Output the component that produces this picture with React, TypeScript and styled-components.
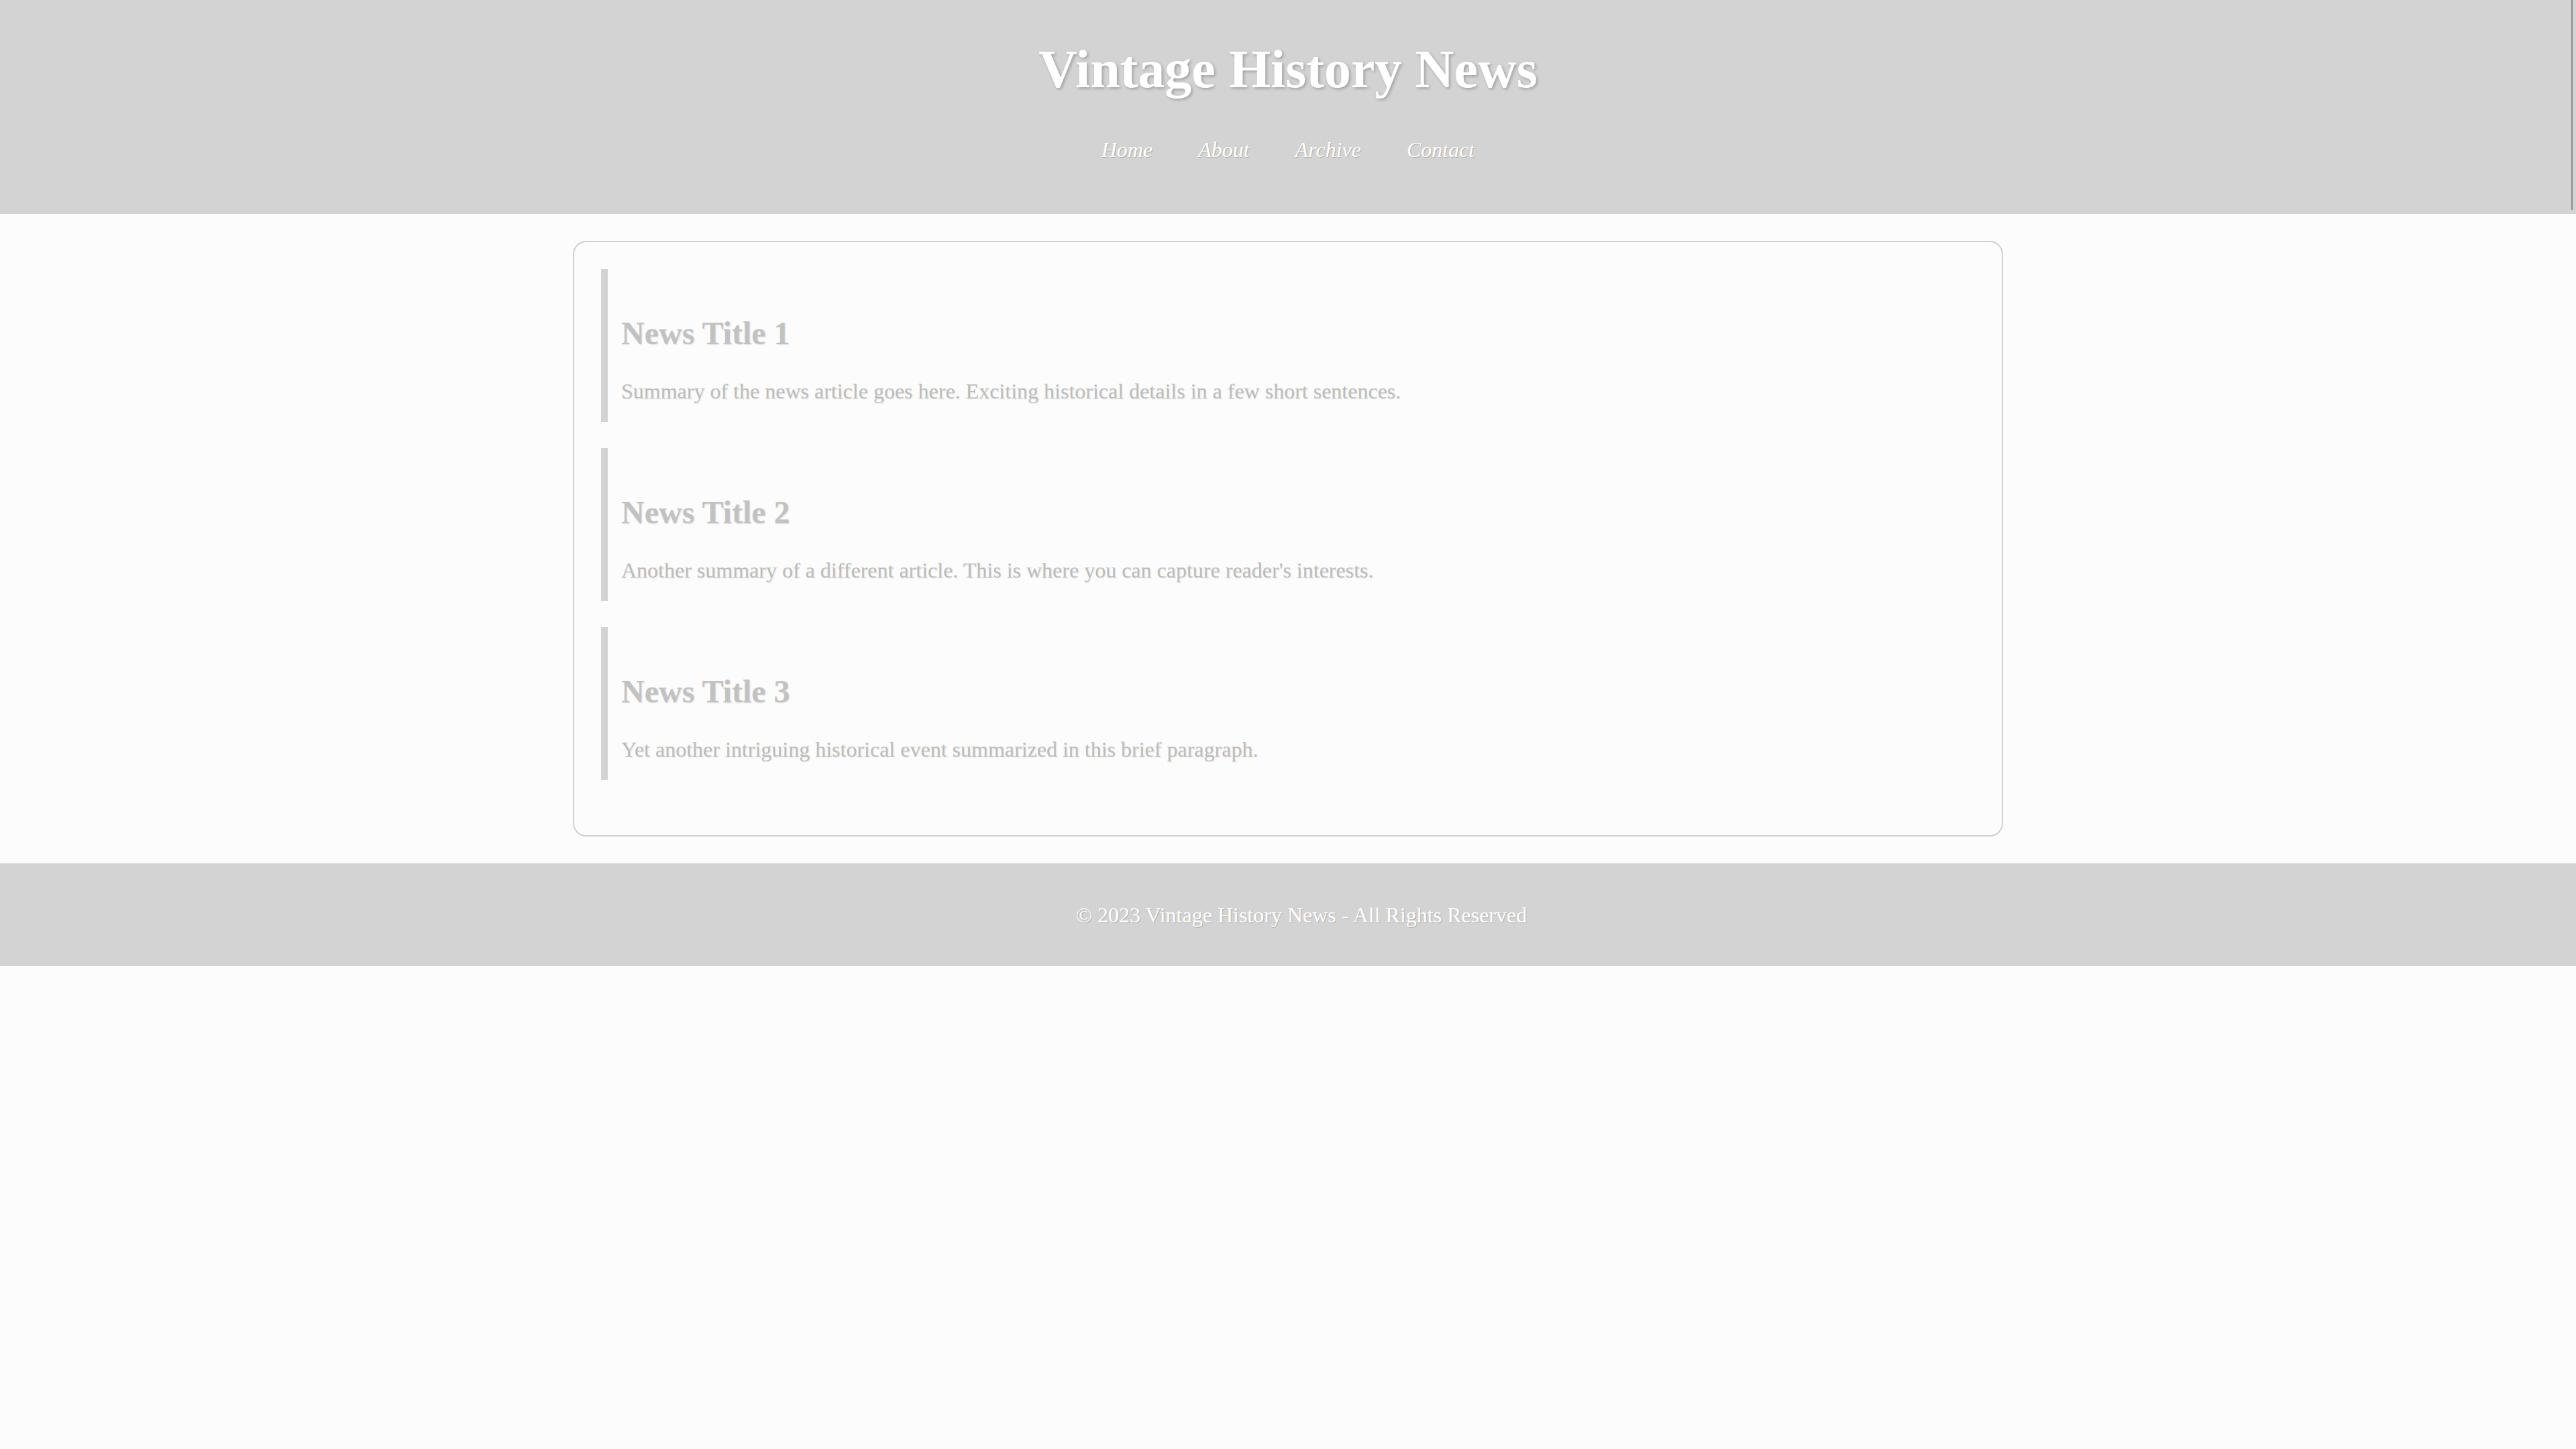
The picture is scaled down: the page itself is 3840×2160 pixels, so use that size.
import React from "react";
import styled, { createGlobalStyle } from "styled-components";

const GlobalStyle = createGlobalStyle`
  html, body {
    margin: 0;
    padding: 0;
    background: #fcfcfc;
  }
  body {
    font-family: "Liberation Serif", "Times New Roman", serif;
    font-size: 32px;
    color: #bdbdbd;
  }
  * { box-sizing: border-box; }
`;

const Header = styled.header`
  position: relative;
  background: #d3d3d3;
  padding: 63px 0 80px;
  display: flex;
  flex-direction: column;
  align-items: center;
  &::after {
    content: "";
    position: absolute;
    top: 0;
    right: 5px;
    bottom: 6px;
    width: 2px;
    background: #8a8a8a;
  }
`;

const SiteTitle = styled.h1`
  margin: 0;
  font-size: 80px;
  line-height: 1;
  font-weight: bold;
  color: #ffffff;
  text-shadow: 2px 2px 4px rgba(0, 0, 0, 0.25);
`;

const Nav = styled.nav`
  margin-top: 64px;
  display: flex;
  gap: 68px;
`;

const NavLink = styled.a`
  font-size: 32px;
  line-height: 1;
  font-style: italic;
  color: #ffffff;
  text-decoration: none;
  text-shadow: 1px 1px 1px rgba(0, 0, 0, 0.2);
`;

const Main = styled.main`
  width: 2132px;
  margin: 40px auto;
  background: #fcfcfc;
  border: 2px solid #d0d0d0;
  border-radius: 20px;
  padding: 40px 40px 82px;
  display: flex;
  flex-direction: column;
  gap: 39px;
`;

const Article = styled.article`
  border-left: 10px solid #d3d3d3;
  padding: 0 20px;
  height: 228px;
`;

const ArticleTitle = styled.h2`
  margin: 72px 0 0;
  font-size: 48px;
  line-height: 1;
  font-weight: bold;
  color: #c2c2c2;
  text-shadow: 1px 1px 2px rgba(0, 0, 0, 0.12);
`;

const Summary = styled.p`
  margin: 46px 0 0;
  font-size: 32px;
  line-height: 1;
  color: #bcbcbc;
  text-shadow: 1px 1px 2px rgba(0, 0, 0, 0.1);
`;

const Footer = styled.footer`
  background: #d3d3d3;
  padding: 61px 0 60px 40px;
  display: flex;
  justify-content: center;
`;

const FooterText = styled.p`
  margin: 0;
  font-size: 32px;
  line-height: 1;
  color: #ffffff;
  text-shadow: 1px 1px 1px rgba(0, 0, 0, 0.18);
`;

const articles = [
  {
    title: "News Title 1",
    summary:
      "Summary of the news article goes here. Exciting historical details in a few short sentences.",
  },
  {
    title: "News Title 2",
    summary:
      "Another summary of a different article. This is where you can capture reader's interests.",
  },
  {
    title: "News Title 3",
    summary:
      "Yet another intriguing historical event summarized in this brief paragraph.",
  },
];

export default function App() {
  return (
    <>
      <GlobalStyle />
      <Header>
        <SiteTitle>Vintage History News</SiteTitle>
        <Nav>
          <NavLink href="#">Home</NavLink>
          <NavLink href="#">About</NavLink>
          <NavLink href="#">Archive</NavLink>
          <NavLink href="#">Contact</NavLink>
        </Nav>
      </Header>
      <Main>
        {articles.map((a) => (
          <Article key={a.title}>
            <ArticleTitle>{a.title}</ArticleTitle>
            <Summary>{a.summary}</Summary>
          </Article>
        ))}
      </Main>
      <Footer>
        <FooterText>© 2023 Vintage History News - All Rights Reserved</FooterText>
      </Footer>
    </>
  );
}
